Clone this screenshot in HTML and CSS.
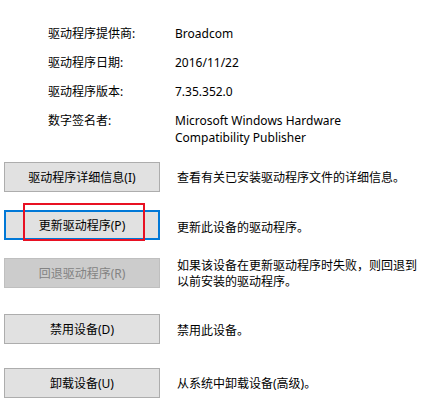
FILE: index.html
```html
<!DOCTYPE html>
<html lang="zh-CN">
<head>
<meta charset="utf-8">
<title>驱动程序</title>
<link rel="stylesheet" href="styles.css">
</head>
<body>
<div class="page">
  <div class="info">
    <div class="label">驱动程序提供商:</div>
    <div class="value">Broadcom</div>
    <div class="label">驱动程序日期:</div>
    <div class="value">2016/11/22</div>
    <div class="label">驱动程序版本:</div>
    <div class="value">7.35.352.0</div>
    <div class="label">数字签名者:</div>
    <div class="value">Microsoft Windows Hardware<br>Compatibility Publisher</div>
  </div>
  <div class="actions">
    <div class="row">
      <div class="btn">驱动程序详细信息(I)</div>
      <div class="desc">查看有关已安装驱动程序文件的详细信息。</div>
    </div>
    <div class="row">
      <div class="btn focused">更新驱动程序(P)<span class="mark"></span></div>
      <div class="desc desc-low">更新此设备的驱动程序。</div>
    </div>
    <div class="row">
      <div class="btn disabled">回退驱动程序(R)</div>
      <div class="desc desc-multi">如果该设备在更新驱动程序时失败，则回退到<br>以前安装的驱动程序。</div>
    </div>
    <div class="row row-spaced">
      <div class="btn">禁用设备(D)</div>
      <div class="desc desc-mid">禁用此设备。</div>
    </div>
    <div class="row row-spaced">
      <div class="btn">卸载设备(U)</div>
      <div class="desc">从系统中卸载设备(高级)。</div>
    </div>
  </div>
</div>
</body>
</html>
```

FILE: styles.css
```css
html, body {
  margin: 0;
  padding: 0;
  background: #ffffff;
}

body {
  font-family: "Noto Sans", "Noto Sans CJK SC", sans-serif;
  font-size: 12px;
  color: #000000;
}

.page {
  padding-top: 25px;
}

.info {
  display: grid;
  grid-template-columns: 127px auto;
  row-gap: 12px;
  margin-left: 48px;
  line-height: 17px;
}

.actions {
  display: flex;
  flex-direction: column;
  gap: 18px;
  margin-top: 16px;
  margin-left: 4px;
}

.row {
  display: flex;
  align-items: flex-start;
  gap: 17px;
}

.row-spaced {
  margin-top: 6px;
}

.btn {
  position: relative;
  box-sizing: border-box;
  width: 156px;
  height: 30px;
  flex: none;
  display: flex;
  align-items: center;
  justify-content: center;
  background: #e1e1e1;
  border: 1px solid #adadad;
  color: #000000;
}

.btn.focused {
  border: 2px solid #0078d7;
}

.btn.disabled {
  background: #cccccc;
  border-color: #bfbfbf;
  color: #838383;
}

.mark {
  position: absolute;
  left: 17px;
  top: -9px;
  width: 122px;
  height: 38px;
  box-sizing: border-box;
  border: 2px solid #e81123;
}

.desc {
  line-height: 17px;
  padding-top: 7px;
}

.desc-low {
  padding-top: 9px;
}

.desc-mid {
  padding-top: 8px;
}

.desc-multi {
  line-height: 16px;
  padding-top: 0;
}
```
